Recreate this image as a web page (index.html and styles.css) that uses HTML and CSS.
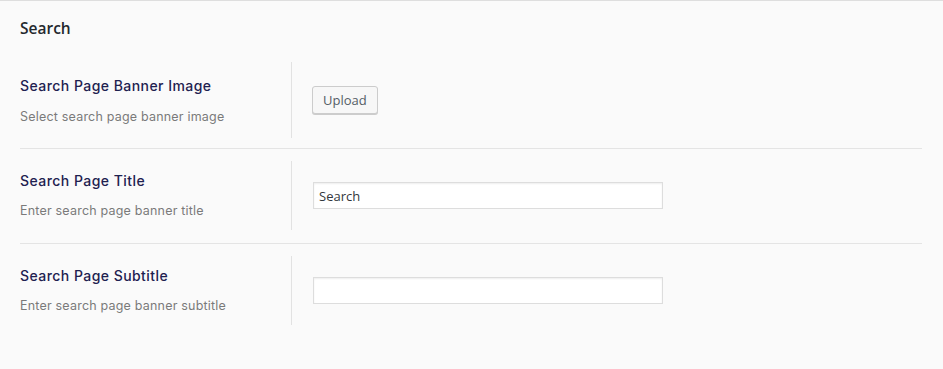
FILE: index.html
```html
<!DOCTYPE html>
<html lang="en">
<head>
<meta charset="utf-8">
<title>Search settings</title>
<link rel="stylesheet" href="styles.css">
</head>
<body>
<div class="panel">
  <h2 class="panel-title">Search</h2>
  <div class="row row-first">
    <div class="label-col">
      <div class="label-title">Search Page Banner Image</div>
      <div class="label-desc">Select search page banner image</div>
    </div>
    <div class="field-col">
      <button class="btn" type="button">Upload</button>
    </div>
  </div>
  <div class="row">
    <div class="label-col">
      <div class="label-title">Search Page Title</div>
      <div class="label-desc">Enter search page banner title</div>
    </div>
    <div class="field-col">
      <input class="text-input" type="text" value="Search">
    </div>
  </div>
  <div class="row row-last">
    <div class="label-col">
      <div class="label-title">Search Page Subtitle</div>
      <div class="label-desc">Enter search page banner subtitle</div>
    </div>
    <div class="field-col">
      <input class="text-input" type="text" value="">
    </div>
  </div>
</div>
</body>
</html>
```
FILE: styles.css
```css
* { box-sizing: border-box; }
html, body { height: 100%; }
body {
  margin: 0;
  background: #fafafa;
  border-top: 1px solid #dedede;
  font-family: "Open Sans", "Liberation Sans", sans-serif;
}
.panel {
  padding: 17px 21px 0 20px;
}
.panel-title {
  margin: 0 0 12px;
  font-size: 15.5px;
  line-height: 20px;
  font-weight: 600;
  color: #23282d;
}
.row {
  display: flex;
  padding: 12px 0 13px;
  border-bottom: 1px solid #e4e4e4;
}
.row-first { padding-bottom: 10px; }
.row-last { border-bottom: none; }
.label-col {
  width: 272px;
  flex: none;
  border-right: 1px solid #e2e2e2;
  padding: 10px 0 9px;
}
.row-first .label-col { padding: 14px 0 11px; }
.label-title {
  font-family: "Inter", "Noto Sans", sans-serif;
  font-size: 14px;
  font-weight: 500;
  letter-spacing: 0.45px;
  line-height: 20px;
  color: #1e2150;
  margin-bottom: 10px;
}
.row-first .label-title { margin-bottom: 11px; }
.label-desc {
  font-family: "Inter", "Noto Sans", sans-serif;
  font-size: 12.5px;
  letter-spacing: 0.2px;
  line-height: 20px;
  color: #7a7a7a;
}
.field-col {
  flex: 1;
  display: flex;
  align-items: center;
  padding-left: 20px;
}
.btn {
  height: 28px;
  padding: 0 10px;
  font-family: "Open Sans", sans-serif;
  font-size: 13px;
  color: #555d66;
  background: #f7f7f7;
  border: 1px solid #cccccc;
  border-radius: 3px;
  box-shadow: 0 1px 0 #cccccc;
}
.text-input {
  margin-left: 1px;
  width: 350px;
  height: 27px;
  padding: 0 5px;
  font-family: "Open Sans", sans-serif;
  font-size: 13px;
  color: #32373c;
  background: #fff;
  border: 1px solid #dddddd;
  box-shadow: inset 0 1px 2px rgba(0,0,0,0.07);
  border-radius: 0;
  outline: none;
}
```
